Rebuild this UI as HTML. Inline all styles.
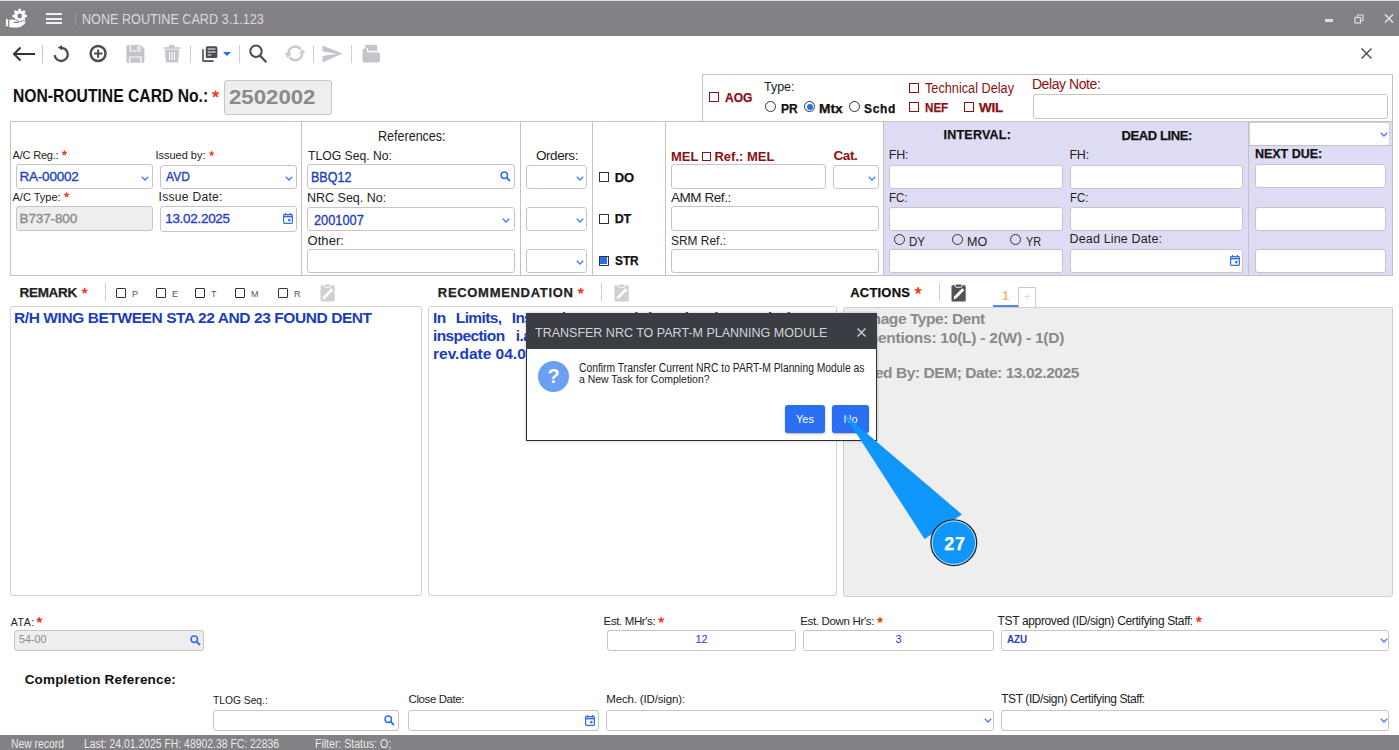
<!DOCTYPE html>
<html><head><meta charset="utf-8">
<style>
*{box-sizing:border-box;margin:0;padding:0}
html,body{width:1399px;height:750px;overflow:hidden;background:#fff;font-family:"Liberation Sans",sans-serif;color:#222}
.a{position:absolute;white-space:nowrap}
.ib{position:absolute;border:1px solid #cbc3c3;border-radius:3px;background:#fff}
.gr{background:#eeeeee}
.lb{position:absolute;white-space:nowrap;font-size:10px;color:#222;line-height:1}
.lm{position:absolute;white-space:nowrap;font-size:12.5px;color:#222;line-height:1}
.req{color:#f53c14;font-weight:bold;font-size:1.2em;line-height:0}
.sb{-webkit-text-stroke:0.35px currentColor}
.sb2{-webkit-text-stroke:0.25px currentColor}
.bt{position:absolute;white-space:nowrap;font-weight:bold;color:#1f3fbf;line-height:1}
.vl{position:absolute;width:1px;background:#c8c0c0}
.hl{position:absolute;height:1px;background:#c8c0c0}
.chev{position:absolute;width:8px;height:5px}
svg{display:block}
.cb{position:absolute;width:10px;height:10px;border:1.3px solid #333;border-radius:1px;background:#fff}
</style></head><body>
<!-- title bar -->
<div class="a" style="left:0;top:0;width:1399px;height:1px;background:#d6e6f5"></div>
<div class="a" style="left:0;top:1px;width:1399px;height:35px;background:#838185"></div>
<svg class="a" style="left:0;top:0" width="32" height="34" viewBox="0 0 32 34"><path d="M18.37 10.46 L18.43 8.71 L20.97 8.71 L21.03 10.46 L22.68 11.14 L23.96 9.95 L25.75 11.74 L24.56 13.02 L25.24 14.67 L26.99 14.73 L26.99 17.27 L25.24 17.33 L24.56 18.98 L25.75 20.26 L23.96 22.05 L22.68 20.86 L21.03 21.54 L20.97 23.29 L18.43 23.29 L18.37 21.54 L16.72 20.86 L15.44 22.05 L13.65 20.26 L14.84 18.98 L14.16 17.33 L12.41 17.27 L12.41 14.73 L14.16 14.67 L14.84 13.02 L13.65 11.74 L15.44 9.95 L16.72 11.14Z M22.10 16.00 A2.4 2.4 0 1 0 17.30 16.00 A2.4 2.4 0 1 0 22.10 16.00Z" fill="#fff" fill-rule="evenodd"/><rect x="5.9" y="19.2" width="2.3" height="7" fill="#fff"/><path d="M8.8 19.8C10.6 19.0 12.8 18.8 14.6 19.4L17.6 20.3C18.6 20.6 18.5 22.0 17.4 22.1L13.6 22.4L17.6 22.5L22.6 20.9C24.6 20.3 26.4 21.2 25.7 22.9C23.6 25.7 20.6 27.9 16.6 28.1L8.8 27.7Z" fill="#fff" stroke="#807e81" stroke-width="0.9"/></svg>
<div class="a" style="left:46px;top:13px;width:16px;height:2px;background:#f0f0f0"></div>
<div class="a" style="left:46px;top:17.5px;width:16px;height:2px;background:#f0f0f0"></div>
<div class="a" style="left:46px;top:22px;width:16px;height:2px;background:#f0f0f0"></div>
<div class="a" style="left:74.5px;top:12px;width:1px;height:13px;background:#9a989b"></div>
<div class="a" id="title" style="left:81.5px;top:10.7px;font-size:15.0px;color:#dadada;line-height:1;letter-spacing:0px;transform:scaleX(0.8418);transform-origin:0 0">NONE ROUTINE CARD 3.1.123</div>
<div class="a" style="left:1325px;top:19px;width:8px;height:3px;background:#dcdcdc"></div>
<svg class="a" style="left:1354px;top:14px" width="10" height="10" viewBox="0 0 10 10"><g fill="none" stroke="#dcdcdc" stroke-width="1.2"><rect x="1" y="3.5" width="5.5" height="5.5"/><path d="M3.5 3.5V1h5.5v5.5H6.5"/></g></svg>
<svg class="a" style="left:1384px;top:14px" width="10" height="9" viewBox="0 0 10 9"><path d="M1 0.5L9 8.5M9 0.5L1 8.5" stroke="#e0e0e0" stroke-width="1.6"/></svg>

<!-- toolbar -->
<svg class="a" style="left:12px;top:46px" width="24" height="16" viewBox="0 0 24 16"><path d="M23 8H2.5M8.5 1.5L2 8l6.5 6.5" fill="none" stroke="#333" stroke-width="2"/></svg>
<div class="a" style="left:42px;top:45px;width:1px;height:18px;background:#c8c8c8"></div>
<svg class="a" style="left:52px;top:44px" width="18" height="19" viewBox="0 0 18 19"><path d="M9.2 3.8A6.6 6.6 0 1 1 2.63 11.1" fill="none" stroke="#4a4d54" stroke-width="2.3"/><path d="M5.8 3.6L10 0.9V6.3z" fill="#4a4d54"/></svg>
<svg class="a" style="left:88px;top:44px" width="20" height="20" viewBox="0 0 20 20"><circle cx="10.1" cy="9.5" r="7.45" fill="none" stroke="#4a4d54" stroke-width="2.5"/><path d="M10.1 5.4v8.4M6 9.5h8.4" stroke="#4a4d54" stroke-width="2"/></svg>
<svg class="a" style="left:126px;top:45px" width="19" height="18" viewBox="0 0 19 18"><path d="M0.4 1.6A1.6 1.6 0 0 1 2 0H14.5L18.4 3.8V16.2A1.6 1.6 0 0 1 16.8 17.8H2A1.6 1.6 0 0 1 0.4 16.2z" fill="#c4c4cc"/><path d="M4.2 0V6H13.8V0M3.8 17.8V12H15V17.8" fill="none" stroke="#fff" stroke-width="1.2"/><rect x="11" y="1.6" width="1.3" height="2.6" fill="#fff"/></svg>
<svg class="a" style="left:163px;top:44px" width="18" height="19" viewBox="0 0 18 19"><path d="M6 1h5.5v2.2h6V4.8H0.5V3.2h5.5z" fill="#c4c4cc"/><path d="M1.8 5.4h14.4l-1 12a1.3 1.3 0 0 1-1.3 1.2H4.1a1.3 1.3 0 0 1-1.3-1.2z" fill="#c4c4cc"/><path d="M6.5 8v8M9 8v8M11.6 8v8" stroke="#fff" stroke-width="1"/></svg>
<div class="a" style="left:190px;top:45px;width:1px;height:18px;background:#cfcfcf"></div>
<svg class="a" style="left:202px;top:46px" width="16" height="16" viewBox="0 0 16 16"><path d="M0.2 3.2v11.2A1.5 1.5 0 0 0 1.7 15.9H11.6v-1.6H1.8V3.2z" fill="#4a4d54"/><rect x="3.8" y="0.2" width="11.6" height="11.8" rx="1.6" fill="#4a4d54"/><path d="M5.7 3h7.8M5.7 6h7.8M5.7 9h3.5" stroke="#fff" stroke-width="1.2"/></svg>
<svg class="a" style="left:223px;top:52px" width="8" height="4" viewBox="0 0 8 4"><path d="M0 0h8L4 4z" fill="#1f6ff0"/></svg>
<div class="a" style="left:239px;top:45px;width:1px;height:18px;background:#cfcfcf"></div>
<svg class="a" style="left:248px;top:44px" width="20" height="20" viewBox="0 0 20 20"><circle cx="8" cy="7.3" r="5.7" fill="none" stroke="#4a4d54" stroke-width="2"/><path d="M12 11.5l6.3 6.8" stroke="#4a4d54" stroke-width="2.2"/></svg>
<svg class="a" style="left:280px;top:40px" width="30" height="26" viewBox="0 0 30 26"><path d="M8.5 13.4A6.8 6.8 0 0 1 20.87 9.5M22.1 13.4A6.8 6.8 0 0 1 9.73 17.3" fill="none" stroke="#c8c8d0" stroke-width="2.4"/><path d="M4.9 13.1L12.1 13.4L7.6 17.9Z M18.6 13.6L25.6 13.3L22.6 9.2Z" fill="#c8c8d0"/></svg>
<div class="a" style="left:313px;top:45px;width:1px;height:18px;background:#cfcfcf"></div>
<svg class="a" style="left:322px;top:45px" width="21" height="18" viewBox="0 0 21 18"><path d="M0.5 0.4L20.4 8.6L0.5 17.5V11L15 8.7L0.5 6.3z" fill="#c4c4cc"/></svg>
<div class="a" style="left:351px;top:45px;width:1px;height:18px;background:#cfcfcf"></div>
<svg class="a" style="left:362px;top:44px" width="19" height="19" viewBox="0 0 19 19"><rect x="3.4" y="0.8" width="11.8" height="6" fill="#c4c4cc"/><path d="M0.5 6.4A1.8 1.8 0 0 1 2.3 4.6H5.5V8.2H16.2A1.8 1.8 0 0 1 18 10V16.7A1.8 1.8 0 0 1 16.2 18.5H2.3A1.8 1.8 0 0 1 0.5 16.7z" fill="#c4c4cc"/><path d="M5.5 4.2V7.6H18" fill="none" stroke="#fff" stroke-width="1"/></svg>
<svg class="a" style="left:1361px;top:48px" width="11" height="11" viewBox="0 0 11 11"><path d="M0.5 0.5l10 10M10.5 0.5l-10 10" stroke="#50535a" stroke-width="1.5"/></svg>

<!-- header -->
<div class="a" id="nrctitle" style="left:12.6px;top:87.7px;font-size:17.5px;font-weight:bold;color:#111;line-height:1;letter-spacing:0px;transform:scaleX(0.8961);transform-origin:0 0">NON-ROUTINE CARD No.:</div>
<div class="ib gr" style="left:224px;top:80px;width:108px;height:35px;border-color:#c8c8c8"></div>
<div class="a" id="nrcno" style="left:229.0px;top:86.8px;font-size:20.5px;font-weight:bold;color:#8a8a8a;line-height:1;letter-spacing:0px;transform:scaleX(1.0830);transform-origin:0 0">2502002</div>

<!-- top box -->
<div class="a" style="left:702px;top:74px;width:691px;height:47px;border:1px solid #c8bfbf;border-bottom:none"></div>
<div class="a" style="left:709px;top:92px;width:9.5px;height:9.5px;border:1.2px solid #8b1010"></div>
<div class="a sb2" id="aog" style="left:725.0px;top:91.3px;font-size:13.5px;font-weight:bold;color:#8b1010;line-height:1;letter-spacing:0px;transform:scaleX(0.8926);transform-origin:0 0">AOG</div>
<div class="a" id="type" style="left:764.0px;top:81.4px;font-size:12.5px;color:#222;line-height:1;letter-spacing:-0.02px;transform:none">Type:</div>
<div class="a" style="left:765px;top:101px;width:11px;height:11px;border:1.2px solid #333;border-radius:50%"></div>
<div class="a sb2" id="pr" style="left:781.0px;top:102.7px;font-size:12.0px;font-weight:bold;color:#111;line-height:1;letter-spacing:-0.00px;transform:none">PR</div>
<div class="a" style="left:804px;top:101px;width:11px;height:11px;border:1.2px solid #333;border-radius:50%;background:#fff"><div style="position:absolute;left:1.5px;top:1.5px;width:6px;height:6px;border-radius:50%;background:#1e6ff0"></div></div>
<div class="a sb2" id="mtx" style="left:819.0px;top:102.7px;font-size:12.0px;font-weight:bold;color:#111;line-height:1;letter-spacing:0px;transform:scaleX(1.1433);transform-origin:0 0">Mtx</div>
<div class="a" style="left:849px;top:101px;width:11px;height:11px;border:1.2px solid #333;border-radius:50%"></div>
<div class="a sb2" id="schd" style="left:864.0px;top:102.7px;font-size:12.0px;font-weight:bold;color:#111;line-height:1;letter-spacing:0.66px;transform:none">Schd</div>
<div class="a" style="left:909px;top:83px;width:9.5px;height:9.5px;border:1.2px solid #8b1010"></div>
<div class="a" id="techdelay" style="left:925.0px;top:81.2px;font-size:14.0px;color:#8b1010;line-height:1;letter-spacing:0px;transform:scaleX(0.9077);transform-origin:0 0">Technical Delay</div>
<div class="a" style="left:909px;top:102px;width:9.5px;height:9.5px;border:1.2px solid #8b1010"></div>
<div class="a sb2" id="nef" style="left:925.0px;top:100.7px;font-size:13.5px;font-weight:bold;color:#8b1010;line-height:1;letter-spacing:0px;transform:scaleX(0.8597);transform-origin:0 0">NEF</div>
<div class="a" style="left:964px;top:102px;width:9.5px;height:9.5px;border:1.2px solid #8b1010"></div>
<div class="a sb2" id="wil" style="left:979.0px;top:100.7px;font-size:13.5px;font-weight:bold;color:#8b1010;line-height:1;letter-spacing:-0.25px;transform:none">WIL</div>
<div class="a" id="delaynote" style="left:1031.9px;top:77.3px;font-size:14.0px;color:#8b1010;line-height:1;letter-spacing:-0.42px;transform:none">Delay Note:</div>
<div class="ib" style="left:1033px;top:94px;width:355px;height:25px"></div>

<!-- main frame -->
<div class="a" style="left:884px;top:122px;width:508px;height:153px;background:#dedcf4"></div>
<div class="a" style="left:10px;top:121px;width:1383px;height:155px;border:1px solid #c8bfbf"></div>
<div class="vl" style="left:301px;top:122px;height:153px"></div>
<div class="vl" style="left:520px;top:122px;height:153px"></div>
<div class="vl" style="left:592px;top:122px;height:153px"></div>
<div class="vl" style="left:665px;top:122px;height:153px"></div>
<div class="vl" style="left:883px;top:122px;height:153px"></div>
<div class="vl" style="left:1248px;top:122px;height:153px"></div>
<div class="lb" id="acreg" style="left:12.5px;top:149.6px;font-size:11.0px;line-height:1;letter-spacing:-0.19px;transform:none">A/C Reg.:</div>
<div class="ib" style="left:16px;top:164px;width:137px;height:25px"></div>
<div class="a bt2 sb" id="ra" style="left:19.5px;top:169.5px;font-size:13.5px;color:#1f3fbf;line-height:1;letter-spacing:-0.21px;transform:none">RA-00002</div>
<svg class="a" style="left:141px;top:176px" width="8" height="5" viewBox="0 0 8 5"><path d="M0.8 0.8L4 4L7.2 0.8" fill="none" stroke="#3a7ef2" stroke-width="1.3"/></svg>
<div class="lb" id="actype" style="left:12.5px;top:191.8px;font-size:11.0px;line-height:1;letter-spacing:0.01px;transform:none">A/C Type:</div>
<div class="ib gr" style="left:16px;top:206px;width:137px;height:25px"></div>
<div class="a sb" id="b737" style="left:19.5px;top:211.5px;font-size:13.5px;color:#8a8a8a;line-height:1;letter-spacing:-0.11px;transform:none">B737-800</div>
<div class="lb" id="issby" style="left:155.4px;top:149.6px;font-size:11.0px;line-height:1;letter-spacing:0.00px;transform:none">Issued by:</div>
<div class="ib" style="left:160px;top:165px;width:137px;height:24px"></div>
<div class="a sb" id="avd" style="left:166.2px;top:169.5px;font-size:13.5px;color:#1f3fbf;line-height:1;letter-spacing:0px;transform:scaleX(0.8924);transform-origin:0 0">AVD</div>
<svg class="a" style="left:285px;top:176px" width="8" height="5" viewBox="0 0 8 5"><path d="M0.8 0.8L4 4L7.2 0.8" fill="none" stroke="#3a7ef2" stroke-width="1.3"/></svg>
<div class="lm" id="issdate" style="left:158.6px;top:191.4px;font-size:12.0px;line-height:1;letter-spacing:0.31px;transform:none">Issue Date:</div>
<div class="ib" style="left:160px;top:206px;width:137px;height:26px"></div>
<div class="a sb" id="date1" style="left:165.2px;top:211.5px;font-size:13.5px;color:#1f3fbf;line-height:1;letter-spacing:-0.30px;transform:none">13.02.2025</div>
<svg class="a" style="left:283px;top:213px" width="10" height="11" viewBox="0 0 10 11"><path d="M2.5 0v2M7.5 0v2" stroke="#2f6fe8" stroke-width="1.3"/><rect x="0.6" y="1.6" width="8.8" height="8.8" rx="0.8" fill="none" stroke="#2f6fe8" stroke-width="1.2"/><path d="M0.6 3.6h8.8" stroke="#2f6fe8" stroke-width="1.6"/><rect x="5.2" y="6" width="2.3" height="2.3" fill="#2f6fe8"/></svg>
<div class="lm" id="refs" style="left:378.0px;top:128.5px;font-size:14.0px;line-height:1;letter-spacing:0px;transform:scaleX(0.8955);transform-origin:0 0">References:</div>
<div class="lm" id="tlogseq" style="left:307.9px;top:148.9px;font-size:13.5px;line-height:1;letter-spacing:0px;transform:scaleX(0.9015);transform-origin:0 0">TLOG Seq. No:</div>
<div class="ib" style="left:307px;top:164px;width:208px;height:25px"></div>
<div class="a sb" id="bbq" style="left:310.9px;top:169.7px;font-size:14.0px;color:#1f3fbf;line-height:1;letter-spacing:0px;transform:scaleX(0.8951);transform-origin:0 0">BBQ12</div>
<svg class="a" style="left:500px;top:171px" width="11" height="11" viewBox="0 0 11 11"><circle cx="4.3" cy="4.3" r="3.2" fill="none" stroke="#2f6fe8" stroke-width="1.5"/><path d="M6.6 6.6L10 10" stroke="#2f6fe8" stroke-width="1.8"/></svg>
<div class="lm" id="nrcseq" style="left:306.6px;top:191.1px;font-size:13.5px;line-height:1;letter-spacing:0px;transform:scaleX(0.9263);transform-origin:0 0">NRC Seq. No:</div>
<div class="ib" style="left:307px;top:207px;width:208px;height:24px"></div>
<div class="a sb" id="nrcv" style="left:313.9px;top:212.6px;font-size:14.0px;color:#1f3fbf;line-height:1;letter-spacing:0px;transform:scaleX(0.9138);transform-origin:0 0">2001007</div>
<svg class="a" style="left:502px;top:218px" width="8" height="5" viewBox="0 0 8 5"><path d="M0.8 0.8L4 4L7.2 0.8" fill="none" stroke="#3a7ef2" stroke-width="1.3"/></svg>
<div class="lm" id="other" style="left:307.5px;top:233.5px;font-size:13.0px;line-height:1;letter-spacing:0.06px;transform:none">Other:</div>
<div class="ib" style="left:307px;top:249px;width:208px;height:24px"></div>
<div class="lm" id="orders" style="left:535.9px;top:148.9px;font-size:13.5px;line-height:1;letter-spacing:-0.41px;transform:none">Orders:</div>
<div class="ib" style="left:526px;top:165px;width:61px;height:24px"></div>
<svg class="a" style="left:576px;top:176px" width="8" height="5" viewBox="0 0 8 5"><path d="M0.8 0.8L4 4L7.2 0.8" fill="none" stroke="#3a7ef2" stroke-width="1.3"/></svg>
<div class="ib" style="left:526px;top:207px;width:61px;height:24px"></div>
<svg class="a" style="left:576px;top:218px" width="8" height="5" viewBox="0 0 8 5"><path d="M0.8 0.8L4 4L7.2 0.8" fill="none" stroke="#3a7ef2" stroke-width="1.3"/></svg>
<div class="ib" style="left:526px;top:249px;width:61px;height:24px"></div>
<svg class="a" style="left:576px;top:260px" width="8" height="5" viewBox="0 0 8 5"><path d="M0.8 0.8L4 4L7.2 0.8" fill="none" stroke="#3a7ef2" stroke-width="1.3"/></svg>
<div class="a" style="left:599px;top:172px;width:10px;height:10px;border:1.3px solid #333"></div>
<div class="a sb2" id="do" style="left:614.7px;top:170.9px;font-size:13.0px;font-weight:bold;color:#111;line-height:1;letter-spacing:-0.09px;transform:none">DO</div>
<div class="a" style="left:599px;top:214px;width:10px;height:10px;border:1.3px solid #333"></div>
<div class="a sb2" id="dt" style="left:614.7px;top:213.4px;font-size:12.5px;font-weight:bold;color:#111;line-height:1;letter-spacing:-0.33px;transform:none">DT</div>
<div class="a" style="left:599px;top:256px;width:10px;height:10px;border:1.3px solid #333;background:#fff"><div style="position:absolute;left:0.4px;top:0.4px;width:6.6px;height:6.6px;background:#2a70f0"></div></div>
<div class="a sb2" id="str" style="left:614.7px;top:255.3px;font-size:12.5px;font-weight:bold;color:#111;line-height:1;letter-spacing:0px;transform:scaleX(0.9450);transform-origin:0 0">STR</div>
<div class="a" id="mel" style="left:671px;top:150px;font-size:13px;font-weight:bold;color:#8b1010;line-height:1">MEL <span style="display:inline-block;width:9px;height:9px;border:1.2px solid #8b1010;vertical-align:0px"></span> Ref.: MEL</div>
<div class="a" id="cat" style="left:833.4px;top:149.2px;font-size:13.5px;font-weight:bold;color:#8b1010;line-height:1;letter-spacing:-0.38px;transform:none">Cat.</div>
<div class="ib" style="left:671px;top:164px;width:155px;height:25px"></div>
<div class="ib" style="left:833px;top:165px;width:46px;height:24px"></div>
<svg class="a" style="left:868px;top:176px" width="8" height="5" viewBox="0 0 8 5"><path d="M0.8 0.8L4 4L7.2 0.8" fill="none" stroke="#3a7ef2" stroke-width="1.3"/></svg>
<div class="lm" id="amm" style="left:671.0px;top:190.7px;font-size:13.5px;line-height:1;letter-spacing:-0.44px;transform:none">AMM Ref.:</div>
<div class="ib" style="left:671px;top:206px;width:208px;height:25px"></div>
<div class="lm" id="srm" style="left:671.0px;top:233.5px;font-size:13.0px;line-height:1;letter-spacing:0px;transform:scaleX(0.9184);transform-origin:0 0">SRM Ref.:</div>
<div class="ib" style="left:671px;top:249px;width:208px;height:24px"></div>
<div class="a sb2" id="interval" style="left:943.5px;top:129.0px;font-size:12.5px;font-weight:bold;color:#111;line-height:1;letter-spacing:0.23px;transform:none">INTERVAL:</div>
<div class="lm" id="fh1" style="left:888.7px;top:149.2px;font-size:12.5px;line-height:1;letter-spacing:-0.18px;transform:none">FH:</div>
<div class="ib" style="left:889px;top:165px;width:174px;height:24px"></div>
<div class="lm" id="fc1" style="left:888.8px;top:191.1px;font-size:13.0px;line-height:1;letter-spacing:0px;transform:scaleX(0.8795);transform-origin:0 0">FC:</div>
<div class="ib" style="left:889px;top:207px;width:174px;height:24px"></div>
<div class="a" style="left:894px;top:234px;width:11px;height:11px;border:1.2px solid #333;border-radius:50%"></div>
<div class="lm" id="dy" style="left:909.0px;top:234.9px;font-size:13.0px;line-height:1;letter-spacing:0px;transform:scaleX(0.8914);transform-origin:0 0">DY</div>
<div class="a" style="left:952px;top:234px;width:11px;height:11px;border:1.2px solid #333;border-radius:50%"></div>
<div class="lm" id="mo" style="left:966.7px;top:234.9px;font-size:13.0px;line-height:1;letter-spacing:0px;transform:scaleX(0.9632);transform-origin:0 0">MO</div>
<div class="a" style="left:1010px;top:234px;width:11px;height:11px;border:1.2px solid #333;border-radius:50%"></div>
<div class="lm" id="yr" style="left:1026.1px;top:234.9px;font-size:13.0px;line-height:1;letter-spacing:0px;transform:scaleX(0.8375);transform-origin:0 0">YR</div>
<div class="ib" style="left:889px;top:249px;width:174px;height:24px"></div>
<div class="a sb2" id="deadline" style="left:1121.6px;top:128.7px;font-size:13.0px;font-weight:bold;color:#111;line-height:1;letter-spacing:-0.41px;transform:none">DEAD LINE:</div>
<div class="lm" id="fh2" style="left:1069.4px;top:149.2px;font-size:12.5px;line-height:1;letter-spacing:-0.18px;transform:none">FH:</div>
<div class="ib" style="left:1070px;top:165px;width:173px;height:24px"></div>
<div class="lm" id="fc2" style="left:1069.5px;top:191.1px;font-size:13.0px;line-height:1;letter-spacing:0px;transform:scaleX(0.8795);transform-origin:0 0">FC:</div>
<div class="ib" style="left:1070px;top:207px;width:173px;height:24px"></div>
<div class="lm" id="dld" style="left:1069.6px;top:233.4px;font-size:12.5px;line-height:1;letter-spacing:0.15px;transform:none">Dead Line Date:</div>
<div class="ib" style="left:1070px;top:249px;width:173px;height:24px"></div>
<svg class="a" style="left:1230px;top:255px" width="10" height="11" viewBox="0 0 10 11"><path d="M2.5 0v2M7.5 0v2" stroke="#2f6fe8" stroke-width="1.3"/><rect x="0.6" y="1.6" width="8.8" height="8.8" rx="0.8" fill="none" stroke="#2f6fe8" stroke-width="1.2"/><path d="M0.6 3.6h8.8" stroke="#2f6fe8" stroke-width="1.6"/><rect x="5.2" y="6" width="2.3" height="2.3" fill="#2f6fe8"/></svg>
<div class="a" style="left:1249px;top:122px;width:141px;height:23px;background:#fff;border:1px solid #d8d2d2;border-radius:3px;border-bottom:none"></div>
<div class="hl" style="left:1249px;top:145px;width:143px"></div>
<svg class="a" style="left:1380px;top:132px" width="8" height="5" viewBox="0 0 8 5"><path d="M0.8 0.8L4 4L7.2 0.8" fill="none" stroke="#3a7ef2" stroke-width="1.3"/></svg>
<div class="a sb2" id="nextdue" style="left:1255.0px;top:148.0px;font-size:12.5px;font-weight:bold;color:#111;line-height:1;letter-spacing:-0.03px;transform:none">NEXT DUE:</div>
<div class="ib" style="left:1255px;top:164px;width:131px;height:24px"></div>
<div class="ib" style="left:1255px;top:207px;width:131px;height:24px"></div>
<div class="ib" style="left:1255px;top:249px;width:131px;height:24px"></div>
<!-- mid -->
<div class="a sb2" id="remark" style="left:19.5px;top:285.6px;font-size:13.5px;font-weight:bold;color:#222;line-height:1;letter-spacing:-0.30px;transform:none">REMARK</div>
<div class="vl" style="left:105px;top:283px;height:18px;background:#d0d0d0"></div>
<div class="a" style="left:116px;top:288px;width:10px;height:10px;border:1.2px solid #333;border-radius:1px"></div>
<div class="a" style="left:132px;top:290px;font-size:9px;color:#555;line-height:1">P</div>
<div class="a" style="left:156px;top:288px;width:10px;height:10px;border:1.2px solid #333;border-radius:1px"></div>
<div class="a" style="left:172px;top:290px;font-size:9px;color:#555;line-height:1">E</div>
<div class="a" style="left:195px;top:288px;width:10px;height:10px;border:1.2px solid #333;border-radius:1px"></div>
<div class="a" style="left:211px;top:290px;font-size:9px;color:#555;line-height:1">T</div>
<div class="a" style="left:235px;top:288px;width:10px;height:10px;border:1.2px solid #333;border-radius:1px"></div>
<div class="a" style="left:251px;top:290px;font-size:9px;color:#555;line-height:1">M</div>
<div class="a" style="left:278px;top:288px;width:10px;height:10px;border:1.2px solid #333;border-radius:1px"></div>
<div class="a" style="left:294px;top:290px;font-size:9px;color:#555;line-height:1">R</div>
<svg class="a" style="left:319.5px;top:283.5px" width="16" height="18" viewBox="0 0 16 18"><rect x="0.5" y="1.3" width="14.2" height="16.2" rx="1.1" fill="#cfcfd4"/><rect x="4.3" y="0.1" width="6.6" height="3.2" rx="1.2" fill="#cfcfd4" stroke="#fff" stroke-width="0.9"/><path d="M2.6 15.6L3.4 12.2L11.3 4.3L13.3 6.3L5.4 14.2Z" fill="#fff"/></svg>
<div class="ib" style="left:10px;top:306px;width:412px;height:290px;border-color:#d6d0d0"></div>
<div class="a" id="remtext" style="left:14.0px;top:310.4px;font-size:15.5px;font-weight:bold;color:#1a3cc0;line-height:1;letter-spacing:-0.42px;transform:none">R/H WING BETWEEN STA 22 AND 23 FOUND DENT</div>
<div class="a sb2" id="recom" style="left:437.8px;top:285.6px;font-size:13.0px;font-weight:bold;color:#222;line-height:1;letter-spacing:0.69px;transform:none">RECOMMENDATION</div>
<div class="vl" style="left:601px;top:283px;height:18px;background:#d0d0d0"></div>
<svg class="a" style="left:613.5px;top:283.5px" width="16" height="18" viewBox="0 0 16 18"><rect x="0.5" y="1.3" width="14.2" height="16.2" rx="1.1" fill="#cfcfd4"/><rect x="4.3" y="0.1" width="6.6" height="3.2" rx="1.2" fill="#cfcfd4" stroke="#fff" stroke-width="0.9"/><path d="M2.6 15.6L3.4 12.2L11.3 4.3L13.3 6.3L5.4 14.2Z" fill="#fff"/></svg>
<div class="ib" style="left:428px;top:306px;width:409px;height:290px;border-color:#d6d0d0"></div>
<div class="a" id="rec1" style="left:433px;top:309.5px;font-size:15.5px;letter-spacing:-0.6px;word-spacing:6.5px;font-weight:bold;color:#1a3cc0;line-height:1;width:400px;overflow:hidden">In Limits, Inspection Found by Planning and the text at top</div>
<div class="a" id="rec2" style="left:433px;top:327.9px;font-size:15.5px;letter-spacing:-0.6px;word-spacing:7.5px;font-weight:bold;color:#1a3cc0;line-height:1">inspection i.a.w. SRM 737-800 ch.51 fig.1 cat.1</div>
<div class="a" id="rec3" style="left:433px;top:346.3px;font-size:15.5px;letter-spacing:0px;font-weight:bold;color:#1a3cc0;line-height:1">rev.date 04.02.2025</div>
<div class="a sb2" id="actions" style="left:850.2px;top:285.9px;font-size:13.0px;font-weight:bold;color:#111;line-height:1;letter-spacing:0.21px;transform:none">ACTIONS</div>
<div class="vl" style="left:939px;top:283px;height:18px;background:#d0d0d0"></div>
<svg class="a" style="left:950.5px;top:283.5px" width="16" height="18" viewBox="0 0 16 18"><rect x="0.5" y="1.3" width="14.2" height="16.2" rx="1.1" fill="#505258"/><rect x="4.3" y="0.1" width="6.6" height="3.2" rx="1.2" fill="#505258" stroke="#fff" stroke-width="0.9"/><path d="M2.6 15.6L3.4 12.2L11.3 4.3L13.3 6.3L5.4 14.2Z" fill="#fff"/></svg>
<div class="a" style="left:1002px;top:289px;font-size:13px;font-weight:bold;color:#f9b683;line-height:1">1</div>
<div class="a" style="left:993px;top:305.2px;width:25px;height:1.6px;background:#5088ee"></div>
<div class="a" style="left:1018px;top:287px;width:18px;height:20px;border:1px solid #d0c6c6;border-bottom:none;background:#fff;font-size:13px;color:#dcdcdc;text-align:center;line-height:18px">+</div>
<div class="ib" style="left:843px;top:307px;width:550px;height:290px;background:#eeeeee;border-color:#d3cccc;border-top-right-radius:0"></div>
<div class="a" id="act1" style="left:848.3px;top:311px;font-size:15.5px;font-weight:bold;color:#8a8a8a;line-height:1;letter-spacing:-0.42px">Damage Type: Dent</div>
<div class="a" id="act2" style="left:849.4px;top:330.1px;font-size:15.5px;font-weight:bold;color:#8a8a8a;line-height:1;letter-spacing:-0.24px">Dimentions: 10(L) - 2(W) - 1(D)</div>
<div class="a" id="act4" style="left:845.7px;top:364.6px;font-size:15.5px;font-weight:bold;color:#8a8a8a;line-height:1;letter-spacing:-0.44px">Issued By: DEM; Date: 13.02.2025</div>
<!-- asterisks -->
<svg class="a" style="left:0;top:0" width="1399" height="750" viewBox="0 0 1399 750"><path d="M215.55 94.00L215.55 91.25M215.55 94.00L218.17 93.15M215.55 94.00L217.17 96.22M215.55 94.00L213.93 96.22M215.55 94.00L212.93 93.15" stroke="#fa3516" stroke-width="1.74" stroke-linecap="round"/><path d="M64.40 152.90L64.40 150.90M64.40 152.90L66.30 152.28M64.40 152.90L65.58 154.52M64.40 152.90L63.22 154.52M64.40 152.90L62.50 152.28" stroke="#fa3516" stroke-width="1.35" stroke-linecap="round"/><path d="M66.60 194.90L66.60 192.90M66.60 194.90L68.50 194.28M66.60 194.90L67.78 196.52M66.60 194.90L65.42 196.52M66.60 194.90L64.70 194.28" stroke="#fa3516" stroke-width="1.35" stroke-linecap="round"/><path d="M211.65 153.50L211.65 151.60M211.65 153.50L213.46 152.91M211.65 153.50L212.77 155.04M211.65 153.50L210.53 155.04M211.65 153.50L209.84 152.91" stroke="#fa3516" stroke-width="1.30" stroke-linecap="round"/><path d="M84.65 290.90L84.65 288.60M84.65 290.90L86.84 290.19M84.65 290.90L86.00 292.76M84.65 290.90L83.30 292.76M84.65 290.90L82.46 290.19" stroke="#fa3516" stroke-width="1.51" stroke-linecap="round"/><path d="M580.75 290.90L580.75 288.50M580.75 290.90L583.03 290.16M580.75 290.90L582.16 292.84M580.75 290.90L579.34 292.84M580.75 290.90L578.47 290.16" stroke="#fa3516" stroke-width="1.56" stroke-linecap="round"/><path d="M918.10 290.60L918.10 287.90M918.10 290.60L920.67 289.77M918.10 290.60L919.69 292.78M918.10 290.60L916.51 292.78M918.10 290.60L915.53 289.77" stroke="#fa3516" stroke-width="1.72" stroke-linecap="round"/><path d="M39.35 620.00L39.35 617.70M39.35 620.00L41.54 619.29M39.35 620.00L40.70 621.86M39.35 620.00L38.00 621.86M39.35 620.00L37.16 619.29" stroke="#fa3516" stroke-width="1.51" stroke-linecap="round"/><path d="M661.15 620.00L661.15 617.70M661.15 620.00L663.34 619.29M661.15 620.00L662.50 621.86M661.15 620.00L659.80 621.86M661.15 620.00L658.96 619.29" stroke="#fa3516" stroke-width="1.51" stroke-linecap="round"/><path d="M880.00 620.00L880.00 617.70M880.00 620.00L882.19 619.29M880.00 620.00L881.35 621.86M880.00 620.00L878.65 621.86M880.00 620.00L877.81 619.29" stroke="#fa3516" stroke-width="1.51" stroke-linecap="round"/><path d="M1198.80 619.45L1198.80 617.10M1198.80 619.45L1201.03 618.72M1198.80 619.45L1200.18 621.35M1198.80 619.45L1197.42 621.35M1198.80 619.45L1196.57 618.72" stroke="#fa3516" stroke-width="1.53" stroke-linecap="round"/></svg>
<!-- dialog -->
<div class="a" style="left:526px;top:313px;width:351px;height:128px;background:#fff;border:1px solid #2b2d31;box-shadow:0 0 3px rgba(0,0,0,0.25)"></div>
<div class="a" style="left:526px;top:313px;width:351px;height:36px;background:#3a3d44"></div>
<div class="a" id="dlgtitle" style="left:534.5px;top:325.8px;font-size:13.5px;color:#d4d4d4;line-height:1;letter-spacing:0px;transform:scaleX(0.9263);transform-origin:0 0">TRANSFER NRC TO PART-M PLANNING MODULE</div>
<svg class="a" style="left:857px;top:328px" width="9" height="9" viewBox="0 0 9 9"><path d="M0.5 0.5l8 8M8.5 0.5l-8 8" stroke="#c8c8c8" stroke-width="1.5"/></svg>
<div class="a" style="left:538px;top:361px;width:31px;height:31px;border-radius:50%;background:#6a9ff2;color:#fff;font-weight:bold;font-size:20px;text-align:center;line-height:31px">?</div>
<div class="a" id="dlgmsg1" style="left:578.7px;top:362.1px;font-size:12.0px;color:#222;line-height:1;letter-spacing:0px;transform:scaleX(0.8605);transform-origin:0 0">Confirm Transfer Current NRC to PART-M Planning Module as</div>
<div class="a" id="dlgmsg2" style="left:578.7px;top:374.3px;font-size:11.5px;color:#222;line-height:1;letter-spacing:0px;transform:scaleX(0.9092);transform-origin:0 0">a New Task for Completion?</div>
<div class="a" style="left:785px;top:405px;width:40px;height:28px;background:#2a6ef2;border-radius:3px;color:#fff;font-size:11px;text-align:center;line-height:28px;box-shadow:0 1px 2px rgba(0,0,0,0.3)">Yes</div>
<div class="a" style="left:832px;top:405px;width:37px;height:28px;background:#2a6ef2;border-radius:3px;color:#fff;font-size:11px;text-align:center;line-height:28px;box-shadow:0 1px 2px rgba(0,0,0,0.3)">No</div>
<!-- callout -->
<svg class="a" style="left:0;top:0" width="1399" height="750" viewBox="0 0 1399 750"><path d="M843.5 413.5L924.5 539L962 514.5z" fill="#0f96fb"/><circle cx="953.8" cy="542.7" r="22.9" fill="#0f96fb" stroke="#262626" stroke-width="1.3"/><circle cx="953.8" cy="542.7" r="21.7" fill="none" stroke="#e8f4ff" stroke-width="0.8"/></svg>
<div class="a sb2" id="n27" style="left:944.2px;top:534.7px;font-size:18.0px;font-weight:bold;color:#fff;line-height:1;letter-spacing:0.79px;transform:none">27</div>
<!-- bottom -->
<div class="lb" id="ata" style="left:10.7px;top:616.5px;font-size:10.5px;line-height:1;letter-spacing:0.55px;transform:none">ATA:</div>
<div class="ib gr" style="left:14px;top:630px;width:190px;height:21px"></div>
<div class="a" id="ata54" style="left:18.7px;top:633.5px;font-size:11.5px;color:#8a8a8a;line-height:1;letter-spacing:0px;transform:scaleX(0.9305);transform-origin:0 0">54-00</div>
<svg class="a" style="left:190px;top:635px" width="11" height="11" viewBox="0 0 11 11"><circle cx="4.3" cy="4.3" r="3.2" fill="none" stroke="#2f6fe8" stroke-width="1.5"/><path d="M6.6 6.6L10 10" stroke="#2f6fe8" stroke-width="1.8"/></svg>
<div class="lb" id="estm" style="left:603.6px;top:615.7px;font-size:11.5px;line-height:1;letter-spacing:-0.38px;transform:none">Est. MHr's:</div>
<div class="ib" style="left:607px;top:630px;width:189px;height:21px"></div>
<div class="a" style="left:607px;top:634px;width:189px;text-align:center;font-size:11px;color:#1f3fbf;line-height:1">12</div>
<div class="lb" id="estd" style="left:800.2px;top:615.7px;font-size:11.5px;line-height:1;letter-spacing:-0.33px;transform:none">Est. Down Hr's:</div>
<div class="ib" style="left:803px;top:630px;width:191px;height:21px"></div>
<div class="a" style="left:803px;top:634px;width:191px;text-align:center;font-size:11px;color:#1f3fbf;line-height:1">3</div>
<div class="lb" id="tstap" style="left:997.6px;top:615.1px;font-size:12.0px;line-height:1;letter-spacing:-0.36px;transform:none">TST approved (ID/sign) Certifying Staff:</div>
<div class="ib" style="left:1001px;top:630px;width:388px;height:21px"></div>
<div class="a" id="azu" style="left:1007.1px;top:633.8px;font-size:11.0px;font-weight:bold;color:#1f3fbf;line-height:1;letter-spacing:0px;transform:scaleX(0.8913);transform-origin:0 0">AZU</div>
<svg class="a" style="left:1380px;top:638px" width="8" height="5" viewBox="0 0 8 5"><path d="M0.8 0.8L4 4L7.2 0.8" fill="none" stroke="#3a7ef2" stroke-width="1.3"/></svg>
<div class="a" id="compref" style="left:24.7px;top:672.9px;font-size:13.5px;font-weight:bold;color:#111;line-height:1;letter-spacing:0.17px;transform:none">Completion Reference:</div>
<div class="lb" id="tlogs" style="left:213.4px;top:694.6px;font-size:11.5px;line-height:1;letter-spacing:0px;transform:scaleX(0.8927);transform-origin:0 0">TLOG Seq.:</div>
<div class="ib" style="left:213px;top:710px;width:186px;height:21px"></div>
<svg class="a" style="left:384px;top:715px" width="11" height="11" viewBox="0 0 11 11"><circle cx="4.3" cy="4.3" r="3.2" fill="none" stroke="#2f6fe8" stroke-width="1.5"/><path d="M6.6 6.6L10 10" stroke="#2f6fe8" stroke-width="1.8"/></svg>
<div class="lb" id="closed" style="left:408.6px;top:694.2px;font-size:11.5px;line-height:1;letter-spacing:-0.42px;transform:none">Close Date:</div>
<div class="ib" style="left:408px;top:710px;width:191px;height:21px"></div>
<svg class="a" style="left:585px;top:715px" width="10" height="11" viewBox="0 0 10 11"><path d="M2.5 0v2M7.5 0v2" stroke="#2f6fe8" stroke-width="1.3"/><rect x="0.6" y="1.6" width="8.8" height="8.8" rx="0.8" fill="none" stroke="#2f6fe8" stroke-width="1.2"/><path d="M0.6 3.6h8.8" stroke="#2f6fe8" stroke-width="1.6"/><rect x="5.2" y="6" width="2.3" height="2.3" fill="#2f6fe8"/></svg>
<div class="lb" id="mech" style="left:606.3px;top:694.2px;font-size:11.5px;line-height:1;letter-spacing:-0.16px;transform:none">Mech. (ID/sign):</div>
<div class="ib" style="left:606px;top:710px;width:388px;height:21px"></div>
<svg class="a" style="left:984px;top:718px" width="8" height="5" viewBox="0 0 8 5"><path d="M0.8 0.8L4 4L7.2 0.8" fill="none" stroke="#3a7ef2" stroke-width="1.3"/></svg>
<div class="lb" id="tstid" style="left:1001.2px;top:693.4px;font-size:12.0px;line-height:1;letter-spacing:-0.41px;transform:none">TST (ID/sign) Certifying Staff:</div>
<div class="ib" style="left:1001px;top:710px;width:388px;height:21px"></div>
<svg class="a" style="left:1380px;top:718px" width="8" height="5" viewBox="0 0 8 5"><path d="M0.8 0.8L4 4L7.2 0.8" fill="none" stroke="#3a7ef2" stroke-width="1.3"/></svg>
<div class="a" style="left:0;top:735px;width:1399px;height:15px;background:#838185"></div>
<div class="a" id="st1" style="left:10.6px;top:738.3px;font-size:12.0px;color:#e8e8e8;line-height:1;letter-spacing:0px;transform:scaleX(0.8619);transform-origin:0 0">New record</div>
<div class="a" id="st2" style="left:83.5px;top:738.3px;font-size:12.0px;color:#e8e8e8;line-height:1;letter-spacing:0px;transform:scaleX(0.8674);transform-origin:0 0">Last: 24.01.2025 FH: 48902.38 FC: 22836</div>
<div class="a" id="st3" style="left:314.5px;top:738.3px;font-size:12.0px;color:#e8e8e8;line-height:1;letter-spacing:0px;transform:scaleX(0.8778);transform-origin:0 0">Filter: Status: O;</div>
</body></html>
